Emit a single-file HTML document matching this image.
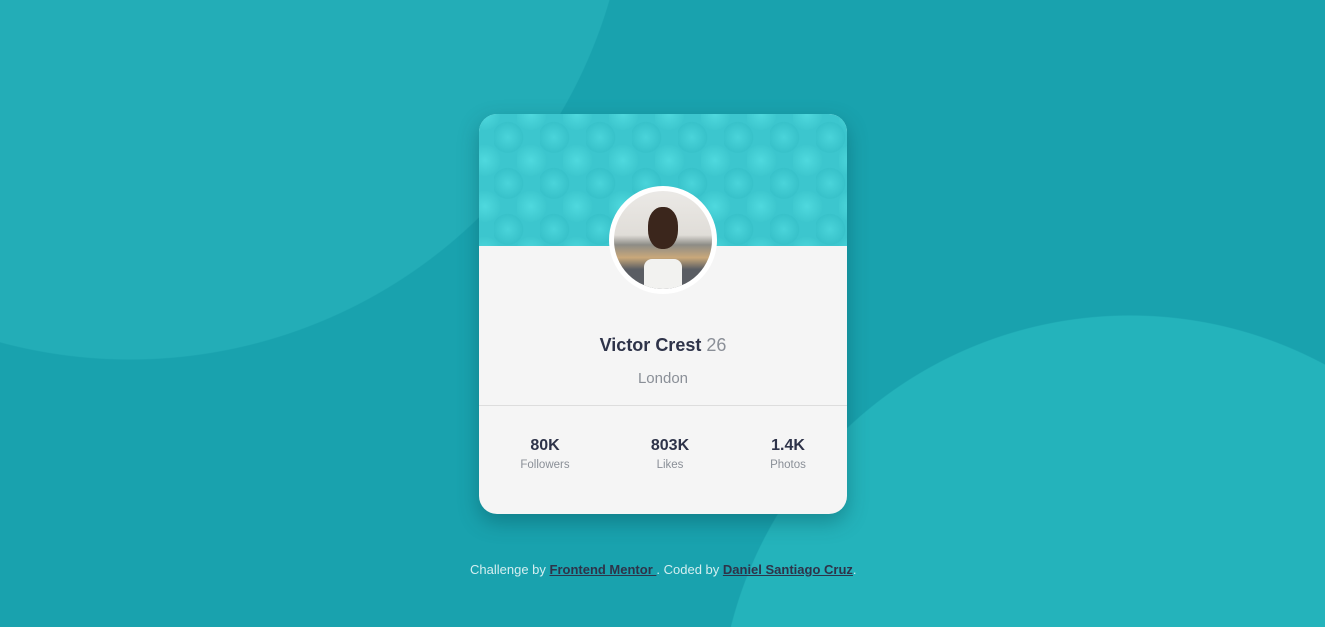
<!DOCTYPE html>
<html><head><style>
html,body{margin:0;padding:0;width:1325px;height:627px;overflow:hidden;}
body{background:#19a2ae;font-family:"Liberation Sans",sans-serif;}
.wrap{position:relative;width:1325px;height:627px;overflow:hidden;
background:
radial-gradient(circle 500px at 130px -140px,#23adb7 499px,transparent 500px),
radial-gradient(circle 412px at 1130px 727px,#24b3bb 411px,transparent 412px),
#19a2ae;}
.card{position:absolute;left:479px;top:114px;width:368px;height:400px;border-radius:18px;background:#f5f5f5;overflow:hidden;box-shadow:0 8px 20px rgba(0,60,70,.35);}
.hdr{position:absolute;left:0;top:0;width:368px;height:132px;background:#3cc6ce;
background-image:radial-gradient(circle at 30% 40%,#4fd9de 0,#3ec8cf 15px,transparent 16px);background-size:46px 46px;background-position:-8px -18px;}
.hdr2{position:absolute;left:0;top:0;right:0;bottom:0;background-image:radial-gradient(circle at 30% 40%,#4ad4da 0,#38c2ca 15px,transparent 16px);background-size:46px 46px;background-position:15px 5px;}
.av{position:absolute;left:130px;top:72px;width:98px;height:98px;border-radius:50%;border:5px solid #fff;overflow:hidden;
background:linear-gradient(#ebe9e6 0,#e0ddd8 45%,#8d8c86 55%,#c9a87a 68%,#5a5d63 80%,#5a5d63 100%);}
.face{position:absolute;left:34px;top:16px;width:30px;height:42px;border-radius:45%;background:#3b261c;}
.shirt{position:absolute;left:30px;top:68px;width:38px;height:30px;background:#f2f2f0;border-radius:8px 8px 0 0;}
.name{position:absolute;top:221px;width:100%;text-align:center;font-size:18px;font-weight:bold;color:#2e3349;}
.name span{font-weight:normal;color:#8a8f97;}
.loc{position:absolute;top:256px;width:100%;text-align:center;font-size:15px;color:#8a8f97;}
.line{position:absolute;top:291px;left:0;width:100%;height:1px;background:#ddd;}
.st{position:absolute;top:323px;text-align:center;width:100px;}
.st b{display:block;font-size:16px;color:#2e3349;}
.st i{display:block;font-style:normal;font-size:11.5px;color:#8a8f97;margin-top:4px;}
.foot{position:absolute;top:562px;left:470px;font-size:13px;color:#d4eef0;white-space:nowrap;}
.foot a{color:#2e3349;font-weight:bold;text-decoration:underline;}
</style></head><body>
<div class="wrap">
<div class="card">
<div class="hdr"><div class="hdr2"></div></div>
<div class="av"><div class="face"></div><div class="shirt"></div></div>
<div class="name">Victor Crest <span>26</span></div>
<div class="loc">London</div>
<div class="line"></div>
<div class="st" style="left:16px"><b>80K</b><i>Followers</i></div>
<div class="st" style="left:141px"><b>803K</b><i>Likes</i></div>
<div class="st" style="left:259px"><b>1.4K</b><i>Photos</i></div>
</div>
<div class="foot">Challenge by <a>Frontend Mentor </a>. Coded by <a>Daniel Santiago Cruz</a>.</div>
</div>
</body></html>
